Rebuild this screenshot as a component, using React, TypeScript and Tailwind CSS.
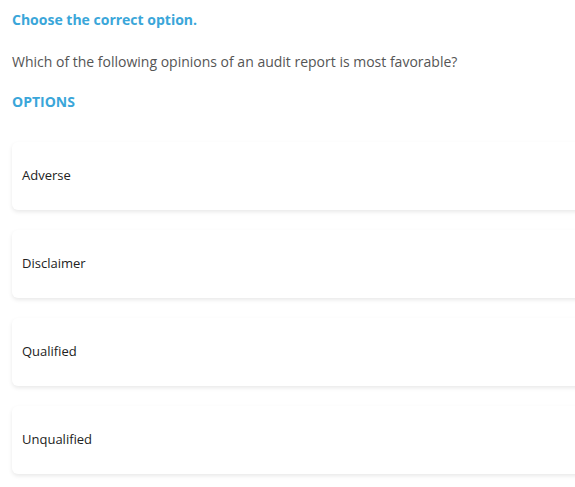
import React from 'react';

const options = ['Adverse', 'Disclaimer', 'Qualified', 'Unqualified'];

const App: React.FC = () => (
  <div className="w-[575px] overflow-hidden bg-white pl-3 pt-[10px] pb-6 font-['Open_Sans',sans-serif]">
    <h2 className="text-[14px] leading-5 font-bold text-[#3aa6d9]">Choose the correct option.</h2>
    <p className="mt-[22px] text-[14px] leading-5 text-[#555555]">
      Which of the following opinions of an audit report is most favorable?
    </p>
    <h3 className="mt-5 text-[14px] leading-5 font-bold text-[#3aa6d9]">OPTIONS</h3>
    <div className="mt-[30px] flex flex-col gap-5">
      {options.map((o) => (
        <div
          key={o}
          className="w-[620px] h-[68px] flex items-center px-[10px] rounded-md bg-white shadow-[0_2px_4px_rgba(0,0,0,0.09)] text-[13px] text-[#222222]"
        >
          {o}
        </div>
      ))}
    </div>
  </div>
);

export default App;
